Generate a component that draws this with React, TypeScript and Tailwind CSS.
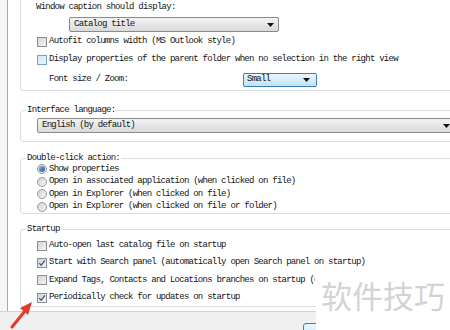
import React from "react";

const Check = ({ checked = false, hover = false }: { checked?: boolean; hover?: boolean }) => (
  <span
    className={`flex h-[10px] w-[10px] shrink-0 items-center justify-center border ${
      hover
        ? "border-[#7aa3c4] bg-gradient-to-br from-[#cfe9f8] to-[#eaf6fd]"
        : "border-[#8e8f8f] bg-gradient-to-br from-[#d4d4d4] to-[#f4f4f4]"
    }`}
  >
    {checked && (
      <svg viewBox="0 0 10 10" className="h-[8px] w-[8px]">
        <path d="M1.5 5.2 L4 7.8 L8.6 1.6" fill="none" stroke="#3d5a94" strokeWidth="1.6" />
      </svg>
    )}
  </span>
);

const Radio = ({ checked = false }: { checked?: boolean }) => (
  <span className="flex h-[10px] w-[10px] shrink-0 items-center justify-center rounded-full border border-[#9a9a9a] bg-gradient-to-br from-[#d2d2d2] to-[#f6f6f6]">
    {checked && <span className="h-[6px] w-[6px] rounded-full bg-gradient-to-br from-[#7fb6e8] to-[#1d5aa5]" />}
  </span>
);

const Arrow = () => (
  <svg viewBox="0 0 7 4" className="h-[4px] w-[7px]">
    <path d="M0 0 H7 L3.5 4 Z" fill="#111" />
  </svg>
);

// group box caption sits on the top border
const Caption = ({ children }: { children: React.ReactNode }) => (
  <span className="absolute -top-[7px] left-[5px] bg-white px-[1px] leading-[12px]">{children}</span>
);

const CheckRow = ({ label, checked, clip }: { label: string; checked?: boolean; clip?: boolean }) => (
  <div className="flex h-[17.33px] items-center gap-[2px] whitespace-nowrap">
    <Check checked={checked} />
    <span className={clip ? "w-[266px] overflow-hidden" : ""}>{label}</span>
  </div>
);

const RadioRow = ({ label, checked }: { label: string; checked?: boolean }) => (
  <div className="flex h-[12.5px] items-center gap-[2px] whitespace-nowrap">
    <Radio checked={checked} />
    <span>{label}</span>
  </div>
);

export default function App() {
  return (
    <div className="relative flex h-[330px] w-[450px] flex-col overflow-hidden bg-[#f0f0f0] font-['Liberation_Mono',monospace] text-[9px] tracking-[-0.75px] text-[#141414]">
      <div className="flex h-[311px] shrink-0">
        <div className="w-[8px] shrink-0 border-r border-[#a9a9a9] bg-[#f6f6f6]" />
        <div className="flex flex-1 flex-col overflow-hidden bg-white pl-[12px]">
          {/* display options */}
          <div className="h-[91px] w-[440px] shrink-0 rounded-b-[3px] border-x border-b border-[#d5dfe5] pl-[15px]">
            <div className="flex h-[14px] items-center pt-[1px]">Window caption should display:</div>
            <div className="ml-[33px] mt-[3px] flex h-[15px] w-[210px] items-center justify-between rounded-[2px] border border-[#8a8a8a] bg-gradient-to-b from-[#f3f3f3] to-[#dadada] pl-[4px] pr-[4px]">
              <span>Catalog title</span>
              <Arrow />
            </div>
            <div className="ml-[1px] mt-[3px] flex h-[14px] items-center gap-[2px] whitespace-nowrap">
              <Check />
              <span>Autofit columns width (MS Outlook style)</span>
            </div>
            <div className="ml-[1px] mt-[4px] flex h-[14px] items-center gap-[2px] whitespace-nowrap">
              <Check hover />
              <span>Display properties of the parent folder when no selection in the right view</span>
            </div>
            <div className="ml-[13px] mt-[6px] flex h-[14px] items-center">
              <span className="w-[194px]">Font size / Zoom:</span>
              <div className="flex h-[14px] w-[74px] items-center justify-between rounded-[2px] border border-[#3c7fb1] bg-gradient-to-b from-[#eaf6fd] to-[#bfe3f8] pl-[3px] pr-[6px]">
                <span>Small</span>
                <Arrow />
              </div>
            </div>
          </div>

          <div className="relative mt-[19px] h-[32px] w-[440px] shrink-0 rounded-[3px] border border-[#d5dfe5] pl-[16px] pt-[7px]">
            <Caption>Interface language:</Caption>
            <div className="flex h-[15px] w-[416px] items-center justify-between rounded-[2px] border border-[#8a8a8a] bg-gradient-to-b from-[#f3f3f3] to-[#dadada] pl-[4px] pr-[2px]">
              <span>English (by default)</span>
              <Arrow />
            </div>
          </div>

          <div className="relative mt-[16px] w-[440px] shrink-0 rounded-[3px] border border-[#d5dfe5] pl-[16px] pt-[4px]">
            <Caption>Double-click action:</Caption>
            <RadioRow label="Show properties" checked />
            <RadioRow label="Open in associated application (when clicked on file)" />
            <RadioRow label="Open in Explorer (when clicked on file)" />
            <RadioRow label="Open in Explorer (when clicked on file or folder)" />
          </div>

          <div className="relative mt-[15px] w-[440px] shrink-0 rounded-[3px] border border-[#d5dfe5] pl-[16px] pt-[7px]">
            <Caption>Startup</Caption>
            <CheckRow label="Auto-open last catalog file on startup" />
            <CheckRow label="Start with Search panel (automatically open Search panel on startup)" checked />
            <CheckRow label="Expand Tags, Contacts and Locations branches on startup (on next start)" clip />
            <CheckRow label="Periodically check for updates on startup" checked />
          </div>
        </div>
      </div>

      <div className="flex flex-1 border-t border-[#d4d4d4] bg-[#f0f0f0]">
        <div className="ml-[303px] mt-[11px] h-[22px] w-[80px] rounded-[3px] border border-[#3c7fb1] bg-gradient-to-b from-[#eaf6fd] to-[#bee6fd]" />
      </div>

      {/* watermark */}
      <div className="absolute left-[316px] top-[272px] flex h-[58px] w-[134px] items-start justify-center bg-white pt-[3px] font-['Noto_Sans_CJK_SC',sans-serif] text-[31px] leading-[40px] tracking-normal text-[#d3d3d3]">
        软件技巧
      </div>

      {/* red arrow */}
      <svg className="absolute left-[8px] top-[298px] h-[32px] w-[30px]" viewBox="0 0 30 32">
        <path d="M4 29 L17 13" stroke="#e8382a" strokeWidth="3" strokeLinecap="round" />
        <path d="M24 4 L12 10 L20 17 Z" fill="#e8382a" />
      </svg>
    </div>
  );
}
